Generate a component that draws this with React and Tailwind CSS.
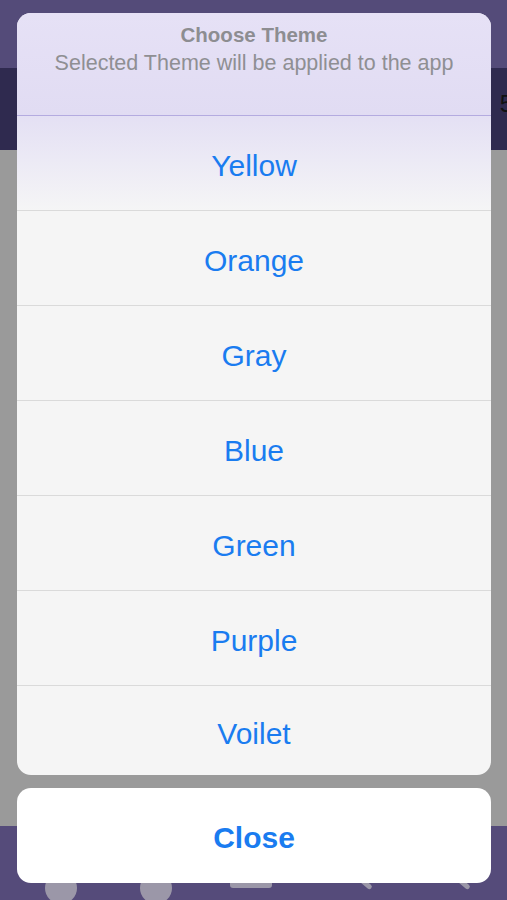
import React from "react";

const items = ["Yellow", "Orange", "Gray", "Blue", "Green", "Purple", "Voilet"];

export default function App() {
  return (
    <div
      className="relative w-full h-[900px] overflow-hidden flex flex-col"
      style={{ fontFamily: '"Liberation Sans", Arial, sans-serif' }}
    >
      {/* background app */}
      <div className="h-[68px] bg-[#544b79]" />
      <div className="h-[82px] bg-[#2f2a4f] flex items-center justify-end">
        <span className="text-[24px] text-[#111] mr-[-6px] mt-[-10px]">5</span>
      </div>
      <div className="flex-1 bg-[#9a9a9a]" />
      <div className="h-[74px] bg-[#554b7a] relative">
        <div className="absolute left-[45px] top-[46px] w-[32px] h-[32px] rounded-full bg-[#9b97a8]" />
        <div className="absolute left-[140px] top-[46px] w-[32px] h-[32px] rounded-full bg-[#9b97a8]" />
        <div className="absolute left-[230px] top-[50px] w-[42px] h-[12px] rounded-[3px] bg-[#9b97a8]" />
        <div className="absolute left-[350px] top-[52px] w-[24px] h-[5px] rotate-[40deg] rounded bg-[#9b97a8]" />
        <div className="absolute left-[448px] top-[52px] w-[24px] h-[5px] rotate-[40deg] rounded bg-[#9b97a8]" />
      </div>

      {/* action sheet */}
      <div className="absolute left-[17px] right-[16px] top-[13px] flex flex-col gap-[13px]">
        <div className="rounded-[14px] overflow-hidden flex flex-col bg-[#f5f5f5]">
          <div className="h-[102px] bg-gradient-to-b from-[#e6e1f6] to-[#e1dcf3] flex flex-col items-center pt-[9px]">
            <div className="text-[20.5px] font-bold text-[#8d8d91] leading-[26px]">Choose Theme</div>
            <div className="text-[21.5px] text-[#8f8f93] leading-[30px]">
              Selected Theme will be applied to the app
            </div>
          </div>
          <div className="h-px bg-[#b4abe0]" />
          {items.map((it, i) => (
            <div
              key={it}
              className={
                "flex items-center justify-center pt-[5px] text-[30px] text-[#1a7cf0] " +
                (i === 0
                  ? "h-[95px] bg-gradient-to-b from-[#e4e0f4] to-[#f5f5f6] border-b border-[#dadada]"
                  : i === items.length - 1
                  ? "h-[89px]"
                  : "h-[95px] border-b border-[#dadada]")
              }
            >
              {it}
            </div>
          ))}
        </div>
        <div className="h-[95px] rounded-[14px] bg-white flex items-center justify-center pt-[4px] text-[30px] font-bold text-[#1a7cf0]">
          Close
        </div>
      </div>
    </div>
  );
}
